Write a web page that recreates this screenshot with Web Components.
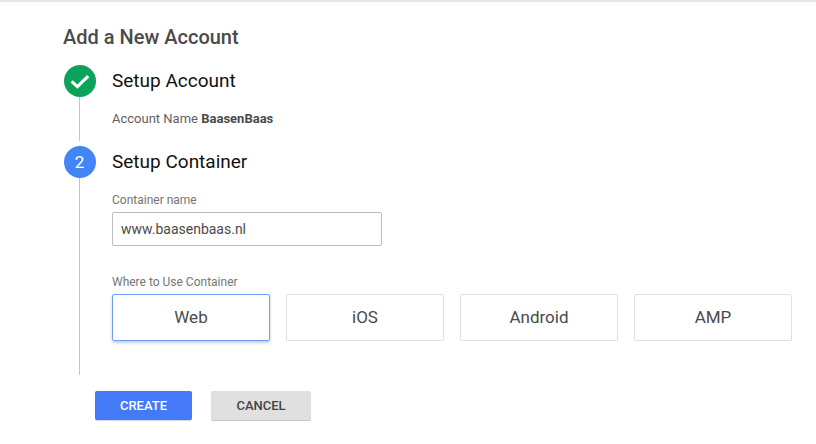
<!DOCTYPE html>
<html lang="en">
<head>
<meta charset="utf-8">
<title>Add a New Account</title>
<style>
    html, body { margin: 0; height: 100%; background: #fff; }
    body { font-family: Roboto, "Liberation Sans", sans-serif; overflow: hidden; }
</style>
</head>
<body>
<account-page heading="Add a New Account">
    <wizard-step title-text="Setup Account" state="done" gap="5">
        <div style="font-size:13px;line-height:16px;color:#5f5f5f;padding-top:14px;height:49px;box-sizing:border-box">Account Name <b style="font-weight:700;color:#4a4a4a">BaasenBaas</b></div>
    </wizard-step>
    <wizard-step title-text="Setup Container" number="2" gap="0">
        <text-field label="Container name" value="www.baasenbaas.nl"></text-field>
        <tile-picker label="Where to Use Container">
            <picker-tile selected>Web</picker-tile>
            <picker-tile>iOS</picker-tile>
            <picker-tile>Android</picker-tile>
            <picker-tile>AMP</picker-tile>
        </tile-picker>
    </wizard-step>
    <div slot="actions" style="display:flex;gap:19px">
        <flat-button kind="primary" style="width:97px">CREATE</flat-button>
        <flat-button style="width:100px">CANCEL</flat-button>
    </div>
</account-page>

<script>
// Page frame: top rule, heading, steps and the action row
class AccountPage extends HTMLElement {
    constructor() {
        super();
        const shadow = this.attachShadow({mode: 'open'});
        shadow.innerHTML = `
        <style>
            :host { display: block; border-top: 2px solid #e6e6e6; }
            h1 {
                margin: 0;
                padding: 23px 0 0 63px;
                font-size: 20px;
                line-height: 24px;
                font-weight: 500;
                color: #4a4a4a;
            }
            .steps { padding: 16px 0 0 64px; }
            .actions { padding: 16px 0 0 95px; }
        </style>
        <h1></h1>
        <div class="steps"><slot></slot></div>
        <div class="actions"><slot name="actions"></slot></div>
        `;
        shadow.querySelector('h1').textContent = this.getAttribute('heading');
    }
}

// One step: circle and connector on the left, title and content on the right
class WizardStep extends HTMLElement {
    constructor() {
        super();
        const shadow = this.attachShadow({mode: 'open'});
        shadow.innerHTML = `
        <style>
            :host { display: flex; }
            .rail { display: flex; flex-direction: column; align-items: center; width: 32px; margin-right: 16px; }
            .circle {
                flex: none;
                box-sizing: border-box;
                width: 32px;
                height: 32px;
                border-radius: 50%;
                display: flex;
                align-items: center;
                justify-content: center;
                color: #fff;
                font-size: 17px;
                background: #4285f4;
                padding-right: 1px;
            }
            .circle.done { background: #0ba35a; padding-right: 0; }
            .line { flex: 1; width: 1px; background: #c4c4c4; margin-left: -1px; }
            .title { font-size: 19px; line-height: 32px; color: #111; }
            svg { display: block; }
        </style>
        <div class="rail">
            <div class="circle"></div>
            <div class="line"></div>
        </div>
        <div class="body">
            <div class="title"></div>
            <slot></slot>
        </div>
        `;
        const circle = shadow.querySelector('.circle');
        if (this.getAttribute('state') === 'done') {
            circle.classList.add('done');
            circle.innerHTML = '<svg width="20" height="20" viewBox="0 0 20 20"><path d="M1.6 10.4 L7.4 15.6 L18.2 5.2" fill="none" stroke="#fff" stroke-width="3.2"/></svg>';
        } else {
            circle.textContent = this.getAttribute('number');
        }
        shadow.querySelector('.title').textContent = this.getAttribute('title-text');
        shadow.querySelector('.line').style.marginBottom = (this.getAttribute('gap') || 0) + 'px';
    }
}

class TextField extends HTMLElement {
    constructor() {
        super();
        const shadow = this.attachShadow({mode: 'open'});
        shadow.innerHTML = `
        <style>
            :host { display: block; padding-top: 15px; }
            label { display: block; font-size: 12px; line-height: 14px; color: #757575; margin-bottom: 5px; }
            .box {
                box-sizing: border-box;
                width: 270px;
                height: 34px;
                border: 1px solid #bdbdbd;
                border-radius: 2px;
                padding: 0 8px;
                font-size: 14px;
                line-height: 32px;
                color: #4a4a4a;
            }
        </style>
        <label></label>
        <div class="box"></div>
        `;
        shadow.querySelector('label').textContent = this.getAttribute('label');
        shadow.querySelector('.box').textContent = this.getAttribute('value');
    }
}

class TilePicker extends HTMLElement {
    constructor() {
        super();
        const shadow = this.attachShadow({mode: 'open'});
        shadow.innerHTML = `
        <style>
            :host { display: block; padding: 29px 0 34px; }
            .label { font-size: 12px; line-height: 14px; color: #757575; margin-bottom: 5px; }
            .row { display: flex; gap: 16px; }
        </style>
        <div class="label"></div>
        <div class="row"><slot></slot></div>
        `;
        shadow.querySelector('.label').textContent = this.getAttribute('label');
    }
}

class PickerTile extends HTMLElement {
    constructor() {
        super();
        const shadow = this.attachShadow({mode: 'open'});
        shadow.innerHTML = `
        <style>
            :host {
                box-sizing: border-box;
                display: flex;
                align-items: center;
                justify-content: center;
                width: 158px;
                height: 47px;
                padding-bottom: 2px;
                border: 1px solid #e0e0e0;
                border-radius: 2px;
                font-size: 17px;
                color: #4a4a4a;
            }
            :host([selected]) {
                border-color: #6f9cf5;
                box-shadow: 0 2px 3px rgba(60,90,150,.3);
            }
        </style>
        <slot></slot>
        `;
    }
}

class FlatButton extends HTMLElement {
    constructor() {
        super();
        const shadow = this.attachShadow({mode: 'open'});
        shadow.innerHTML = `
        <style>
            :host {
                box-sizing: border-box;
                display: inline-flex;
                align-items: center;
                justify-content: center;
                height: 29px;
                border-radius: 2px;
                font-size: 13px;
                font-weight: 500;
                background: #e0e0e0;
                color: #444;
                box-shadow: 0 1px 0 #c8c8c8;
            }
            :host([kind="primary"]) { background: #4479f7; color: #fff; box-shadow: 0 1px 0 #d5d5d5; }
        </style>
        <slot></slot>
        `;
    }
}

customElements.define('account-page', AccountPage);
customElements.define('wizard-step', WizardStep);
customElements.define('text-field', TextField);
customElements.define('tile-picker', TilePicker);
customElements.define('picker-tile', PickerTile);
customElements.define('flat-button', FlatButton);
</script>
</body>
</html>
